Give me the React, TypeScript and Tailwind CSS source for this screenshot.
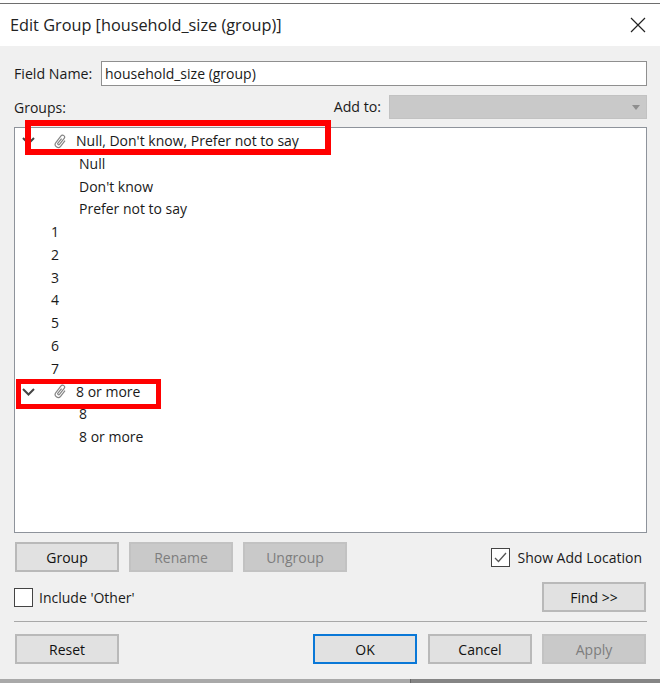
const FONT = "font-['Open_Sans','Noto_Sans',sans-serif]";

const Btn = ({ label, disabled, primary, className = '' }: { label: string; disabled?: boolean; primary?: boolean; className?: string }) => (
  <button
    type="button"
    className={`h-[30px] w-[104px] shrink-0 border-2 text-[14px] ${
      disabled
        ? 'bg-[#c9c9c9] border-[#c2c2c2] text-[#7d7d7d]'
        : primary
          ? 'bg-[#e1e1e1] border-[#0a78d7] text-[#111]'
          : 'bg-[#e1e1e1] border-[#b9b9b9] text-[#111]'
    } ${className}`}
  >
    {label}
  </button>
);

const Clip = () => (
  <svg width="15" height="15" viewBox="0 0 15 15" fill="none" stroke="#858585" strokeWidth="1.2" className="shrink-0">
    <path transform="rotate(38 7.5 7.5)" d="M10.5 4v7.2a3 3 0 0 1-6 0V2.8a2 2 0 0 1 4 0v7.6a1 1 0 0 1-2 0V4.5" />
  </svg>
);

const Chevron = () => (
  <svg width="13" height="8" viewBox="0 0 13 8" fill="none" stroke="#444" strokeWidth="2" className="shrink-0">
    <path d="M1 1l5.5 5.5L12 1" />
  </svg>
);

const GroupRow = ({ label, labelClass = '' }: { label: string; labelClass?: string }) => (
  <div className="flex h-[22.75px] items-center pl-[7px]">
    <Chevron />
    <span className="ml-[18px]"><Clip /></span>
    <span className={`ml-[8px] ${labelClass}`}>{label}</span>
  </div>
);

const Child = ({ label }: { label: string }) => <div className="h-[22.75px] pl-[64px] leading-[22.75px]">{label}</div>;
const Plain = ({ label }: { label: string }) => <div className="h-[22.75px] pl-[36px] leading-[22.75px]">{label}</div>;

export default function App() {
  return (
    <div className={`${FONT} relative flex h-[683px] w-[660px] flex-col overflow-hidden bg-white text-[14px] text-[#1a1a1a]`}>
      <div className="mt-[3px] h-px shrink-0 bg-[#6e6e6e]" />

      {/* title bar */}
      <div className="flex h-[42px] shrink-0 items-center justify-between pl-[10px] pr-[14px]">
        <span className="text-[16.3px] text-[#222]">Edit Group [household_size (group)]</span>
        <svg width="16" height="16" viewBox="0 0 16 16" stroke="#222" strokeWidth="1.2">
          <path d="M1 1l14 14M15 1L1 15" />
        </svg>
      </div>

      {/* body */}
      <div className="flex h-[633px] shrink-0 flex-col bg-[#f0f0f0] pl-[14px] pr-[13px] pt-[15px]">
        <div className="flex h-[25px] items-center">
          <span className="w-[87px] text-[14.2px]">Field Name:</span>
          <div className="flex h-[25px] flex-1 items-center border border-[#8f8f8f] bg-white pl-[3px]">household_size (group)</div>
        </div>

        <div className="mt-[9px] flex h-[24px] items-center">
          <span className="flex-1">Groups:</span>
          <span className="mr-[8px] text-[14.2px]">Add to:</span>
          <div className="flex h-[24px] w-[258px] items-center justify-end border border-[#c2c2c2] bg-[#c9c9c9] pr-[6px]">
            <div className="h-0 w-0 border-x-[4px] border-t-[5px] border-x-transparent border-t-[#8e8e8e]" />
          </div>
        </div>

        {/* tree */}
        <div className="mt-[8px] h-[406px] border border-[#8e939b] bg-white pt-[2px] text-[#1a1a1a]">
          <GroupRow label="Null, Don't know, Prefer not to say" labelClass="-translate-y-px" />
          <Child label="Null" />
          <Child label="Don't know" />
          <Child label="Prefer not to say" />
          {['1', '2', '3', '4', '5', '6', '7'].map(n => (
            <Plain key={n} label={n} />
          ))}
          <GroupRow label="8 or more" />
          <Child label="8" />
          <Child label="8 or more" />
        </div>

        <div className="mt-[9px] flex h-[30px] items-center pl-px">
          <Btn label="Group" />
          <Btn label="Rename" disabled className="ml-[10px]" />
          <Btn label="Ungroup" disabled className="ml-[10px]" />
          <div className="ml-auto flex items-center pr-[5px]">
            <div className="flex h-[19px] w-[19px] items-center justify-center border border-[#444] bg-white">
              <svg width="13" height="11" viewBox="0 0 13 11" fill="none" stroke="#555" strokeWidth="1.3">
                <path d="M1 6l3.5 3.5L12 1" />
              </svg>
            </div>
            <span className="ml-[7px]">Show Add Location</span>
          </div>
        </div>

        <div className="mt-[10px] flex h-[30px] items-center">
          <div className="h-[19px] w-[19px] border border-[#444] bg-white" />
          <span className="ml-[6px]">Include 'Other'</span>
          <Btn label="Find >>" className="ml-auto mr-px" />
        </div>

        <div className="mt-[9px] h-px bg-[#a8a8a8]" />

        <div className="mt-[12px] flex h-[30px] items-center pl-px pr-px">
          <Btn label="Reset" />
          <Btn label="OK" primary className="ml-auto" />
          <Btn label="Cancel" className="ml-[11px]" />
          <Btn label="Apply" disabled className="ml-[10px]" />
        </div>
      </div>

      {/* window edge below the dialog */}
      <div className="flex h-[4px] shrink-0">
        <div className="w-[410px] bg-[#a9a9a9]" />
        <div className="flex-1 border-l border-[#666] bg-[#858585]" />
      </div>

      {/* red annotation boxes */}
      <div className="absolute left-[25px] top-[120px] h-[35px] w-[306px] border-[6px] border-[#ff0000]" />
      <div className="absolute left-[16px] top-[379px] h-[30px] w-[145px] border-[5px] border-[#ff0000]" />
    </div>
  );
}
